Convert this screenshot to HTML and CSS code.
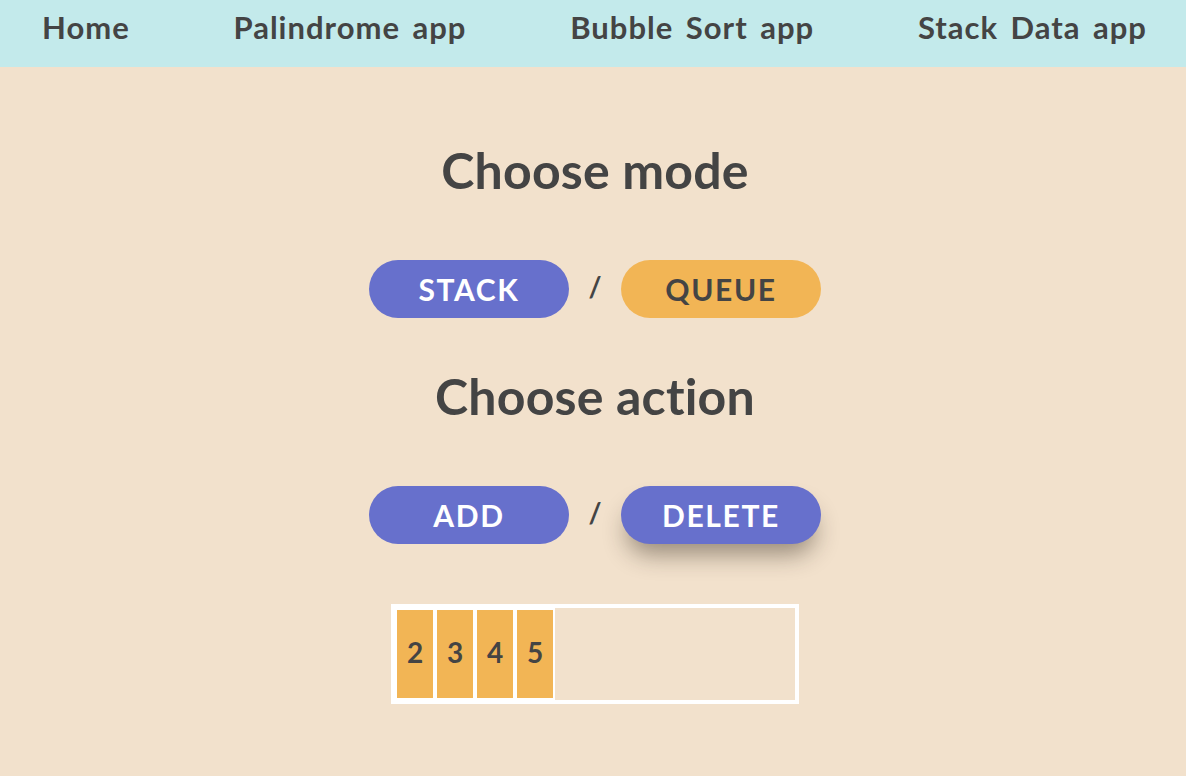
FILE: index.html
```html
<!DOCTYPE html>
<html lang="en">
<head>
<meta charset="utf-8">
<title>Stack Data app</title>
<link rel="stylesheet" href="styles.css">
</head>
<body>
<nav class="nav">
  <a class="nav-link" href="#">Home</a>
  <a class="nav-link" href="#">Palindrome app</a>
  <a class="nav-link" href="#">Bubble Sort app</a>
  <a class="nav-link" href="#">Stack Data app</a>
</nav>
<main class="main">
  <h1 class="title title-mode">Choose mode</h1>
  <div class="choice">
    <button class="btn btn-blue">STACK</button>
    <span class="slash">/</span>
    <button class="btn btn-orange">QUEUE</button>
  </div>
  <h1 class="title title-action">Choose action</h1>
  <div class="choice">
    <button class="btn btn-blue">ADD</button>
    <span class="slash">/</span>
    <button class="btn btn-blue btn-raised">DELETE</button>
  </div>
  <div class="stack">
    <div class="cell">2</div>
    <div class="cell">3</div>
    <div class="cell">4</div>
    <div class="cell">5</div>
  </div>
</main>
</body>
</html>
```

FILE: styles.css
```css
* { box-sizing: border-box; }

body {
  margin: 0;
  background: #f2e1cc;
  color: #444444;
  font-family: "Lato", "Liberation Sans", sans-serif;
  min-height: 776px;
}

.nav {
  height: 67px;
  background: #c3eaeb;
  display: flex;
  justify-content: space-between;
  align-items: flex-start;
  padding: 11px 39px 0 42px;
}

.nav-link {
  color: #444444;
  text-decoration: none;
  font-size: 31px;
  line-height: 32px;
  font-weight: 700;
  letter-spacing: 1px;
  word-spacing: 4px;
}

.main {
  display: flex;
  flex-direction: column;
  align-items: center;
  padding-left: 4px;
}

.title {
  margin: 0;
  font-size: 50px;
  line-height: 50px;
  font-weight: 700;
  letter-spacing: 0.2px;
}

.title-mode { margin-top: 78px; }
.title-action { margin-top: 53px; }

.choice {
  margin-top: 65px;
  display: flex;
  align-items: center;
}

.btn {
  width: 200px;
  height: 58px;
  border: none;
  border-radius: 29px;
  font-family: "Lato", "Liberation Sans", sans-serif;
  font-size: 30px;
  font-weight: 700;
  letter-spacing: 1.6px;
  padding: 0 0 1px;
  display: flex;
  align-items: center;
  justify-content: center;
}

.btn-blue { background: #6770cc; color: #ffffff; }
.btn-orange { background: #f2b555; color: #444444; }
.btn-raised { box-shadow: 0 16px 24px -6px rgba(40, 30, 20, 0.45); }

.slash {
  width: 52px;
  text-align: center;
  font-size: 28px;
  font-weight: 700;
  line-height: 28px;
  margin-top: -6px;
}

.stack {
  margin-top: 60px;
  width: 408px;
  height: 100px;
  border: 4px solid #ffffff;
  display: flex;
}

.cell {
  width: 40px;
  height: 92px;
  border: 2px solid #ffffff;
  background: #f2b555;
  display: flex;
  align-items: center;
  justify-content: center;
  font-size: 28px;
  font-weight: 700;
  padding-bottom: 4px;
}
```
